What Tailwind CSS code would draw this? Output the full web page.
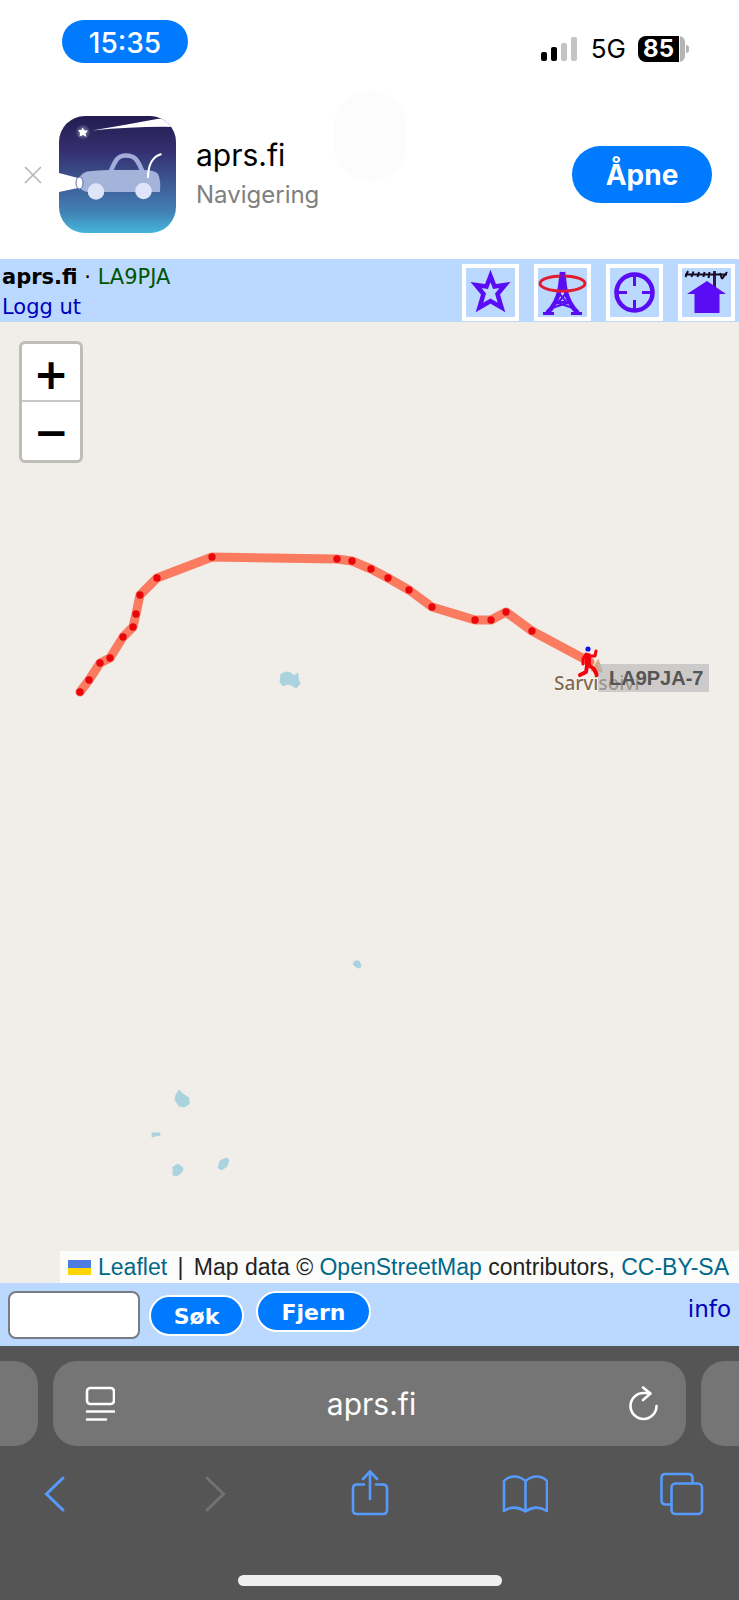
<!DOCTYPE html>
<html lang="no">
<head>
  <meta charset="UTF-8">
  <meta name="viewport" content="width=device-width, initial-scale=1">
  <title>aprs.fi</title>
  <script src="https://cdn.jsdelivr.net/npm/@tailwindcss/browser@4"></script>
</head>
<body class="min-h-screen flex flex-col bg-white text-black font-[Inter,sans-serif] overflow-x-hidden">

  <!-- Phone status bar -->
  <div class="relative flex items-start justify-between h-21 pt-5 pl-[62px] pr-[50px]">
    <div class="w-[126px] h-[43px] rounded-full bg-[#007aff] text-white text-[28px] leading-[46px] text-center font-medium">15:35</div>
    <div class="flex items-center gap-3 mt-4">
      <svg class="w-[38px] h-[26px]" viewBox="0 0 38 26">
        <rect x="0" y="16" width="6" height="9" rx="2" fill="#000"/>
        <rect x="10" y="11" width="6" height="14" rx="2" fill="#000"/>
        <rect x="20" y="7" width="6" height="18" rx="2" fill="#c4c4c4"/>
        <rect x="30" y="1" width="6" height="24" rx="2" fill="#c4c4c4"/>
      </svg>
      <span class="text-[26px] leading-[26px]">5G</span>
      <div class="flex items-center">
        <div class="w-[41px] h-[26px] rounded-l-lg bg-black text-white text-[24px] leading-[26px] text-center font-bold">85</div>
        <div class="w-[6px] h-[26px] rounded-r-lg bg-[#b4b4b4] border-l border-white"></div>
        <div class="w-[3px] h-2 ml-px rounded-r-full bg-[#b4b4b4]"></div>
      </div>
    </div>
    <div class="absolute left-1/2 top-[91px] -translate-x-1/2 w-[73px] h-[90px] rounded-full bg-[#fcfcfc]"></div>
  </div>

  <!-- App banner -->
  <div class="relative flex items-center h-[175px] pt-[6px] pl-6 pr-[27px]">
    <button aria-label="Lukk">
      <svg class="w-[18px] h-[18px]" viewBox="0 0 18 18" fill="none" stroke="#b5b5b5" stroke-width="1.6"><path d="M1 1 17 17M17 1 1 17"/></svg>
    </button>
    <svg class="w-[117px] h-[117px] ml-[17px] rounded-[26px]" viewBox="0 0 117 117">
      <defs>
        <linearGradient id="sky" x1="0" y1="0" x2="0" y2="1">
          <stop offset="0" stop-color="#231c50"/>
          <stop offset=".3" stop-color="#352f70"/>
          <stop offset=".65" stop-color="#3f669f"/>
          <stop offset=".82" stop-color="#4181b4"/>
          <stop offset="1" stop-color="#46b5dc"/>
        </linearGradient>
        <radialGradient id="glow"><stop offset="0" stop-color="#fff" stop-opacity=".5"/><stop offset="1" stop-color="#fff" stop-opacity="0"/></radialGradient>
      </defs>
      <rect width="117" height="117" fill="url(#sky)"/>
      <path d="M33 14.5Q66 9 98 3L117 1V11Q80 10 33 14.5Z" fill="#fff"/>
      <circle cx="24" cy="16" r="8" fill="url(#glow)"/>
      <path d="M23.500 11.500 25.500 14.500 29 14.500 26.500 17.500 27.500 21 24 19 20.500 20.500 21 17 19 14 22.500 14Z" fill="#fff"/>
      <path d="M0 57 19 62V72L0 76Z" fill="#fff"/>
      <path d="M51 57C56 45 58 39.500 67 39.500S79 44 84 57" fill="none" stroke="#a3abd9" stroke-width="4.500"/>
      <path d="M19 67Q20 58 28 55.500Q40 54 50 54H84Q96 54 99 58Q102 64 101 76H28Q20 74 19 67Z" fill="#a4b3da"/>
      <path d="M89 62C89 50 92 41 102.500 38" fill="none" stroke="#fff" stroke-width="2"/>
      <ellipse cx="20.500" cy="67" rx="3.500" ry="6" fill="#fff" stroke="#5a6cab" stroke-width="1"/>
      <circle cx="37" cy="75.500" r="8.300" fill="#dfe5f8"/>
      <circle cx="84.500" cy="75" r="8.300" fill="#dfe5f8"/>
    </svg>
    <div class="flex-1 pl-5">
      <div class="text-[30px] leading-10">aprs.fi</div>
      <div class="text-[24px] leading-10 text-[#808080]">Navigering</div>
    </div>
    <button class="w-[140px] h-[57px] rounded-full bg-[#007aff] text-white text-[28px] font-bold">Åpne</button>
  </div>

  <!-- aprs.fi header -->
  <header class="flex justify-between items-start bg-[#bbd8ff] pt-[3px] pl-[2px] pr-1 font-['DejaVu_Sans',sans-serif] text-[21px] leading-[30px]">
    <div>
      <div><b>aprs.fi</b> · <a href="#" class="text-[#005500]">LA9PJA</a></div>
      <a href="#" class="text-[#0000bb] block">Logg ut</a>
    </div>
    <nav class="flex gap-[15px] pt-[2px]">
      <button aria-label="Favoritter" class="border-4 border-white">
        <svg class="w-[49px] h-[49px]" viewBox="0 0 49 49" fill="none" stroke="#5a0cf5" stroke-width="4.500">
          <path d="M24.500 8 28.500 18.500 39 17 31.500 26 35.500 39.500 24.500 33 13.500 39.500 17.500 26 10 17 20.500 18.500Z"/>
        </svg>
      </button>
      <button aria-label="Stasjoner" class="border-4 border-white">
        <svg class="w-[49px] h-[49px]" viewBox="0 0 49 49" fill="none" stroke="#5a0cf5" stroke-width="3">
          <path d="M24 4 22 20Q19 36 9 45M25 4 27 20Q30 36 40 45" stroke-width="4.500"/>
          <path d="M21 20H28M20 24 30 36M29 24 19 36M17 34H32M14 40 32 34M35 40 17 34" stroke-width="2"/>
          <path d="M5 45.500H16M33 45.500H44"/>
          <ellipse cx="24.500" cy="15.500" rx="22.500" ry="7.500" stroke="#e01c30" stroke-width="3"/>
          <path d="M24.500 4V22" stroke-width="4"/>
        </svg>
      </button>
      <button aria-label="Min posisjon" class="border-4 border-white">
        <svg class="w-[49px] h-[49px]" viewBox="0 0 49 49" fill="none" stroke="#5a0cf5" stroke-width="4.500">
          <circle cx="24.500" cy="24.500" r="18"/>
          <path d="M24.500 6V18M24.500 32V43M6 24.500H17M32 24.500H43" stroke-width="3"/>
        </svg>
      </button>
      <button aria-label="Hjem" class="border-4 border-white">
        <svg class="w-[49px] h-[49px]" viewBox="0 0 49 49">
          <path d="M32.500 3V22" stroke="#3d1060" stroke-width="3"/>
          <path d="M3 6.500H45M6 3 3.500 9M11.500 3.500 9.500 9M17 4 15.500 9M22.500 4 21.500 9M27.500 4 26.500 10M38 5 40 11M45 4 40 11" stroke="#160c22" stroke-width="2" fill="none"/>
          <path d="M25 13 44 26H37.500V45H12.500V26H5Z" fill="#5a0cf5"/>
        </svg>
      </button>
    </nav>
  </header>

  <!-- Map -->
  <main class="relative flex-1 min-h-[600px] bg-[#f1eee9] overflow-hidden">
    <svg class="absolute inset-0 w-full h-full" viewBox="0 0 739 961" preserveAspectRatio="xMidYMid slice">
      <!-- lakes -->
      <g fill="#aad3df" stroke="#aad3df" stroke-linejoin="round">
        <path d="M281 352 286 350 291 351 294 354 298 351 298 356 300 362 296 366 291 363 288 362 283 364 280 360Z"/>
        <path d="M355 639 359 639 361 643 360 646 356 645 353 642Z"/>
        <path d="M179 768 183 772 189 776 189 782 184 785 179 784 175 778 176 773Z"/>
        <path d="M152 811 160 811 160 813 155 814 152 815Z"/>
        <path d="M173 845 178 842 183 846 182 850 177 854 173 853Z"/>
        <path d="M220 839 226 836 229 838 227 844 222 848 218 846Z"/>
      </g>
      <path d="M593 348 598 340 601 349Z" fill="#d9a882" stroke="#d9a882" stroke-width="3"/>
      <text x="554" y="368" font-family="Noto Sans, sans-serif" font-size="19" font-weight="500" fill="#806850" stroke="#f7f5f2" stroke-width="2" paint-order="stroke">Sarvisoivi</text>
      <!-- track -->
      <polyline fill="none" stroke="#fa7b60" stroke-width="9" stroke-linecap="round" stroke-linejoin="round"
        points="80,370 89,358 100,341 110,336 123,315 133,305 136,292 140,273 157,256 212,235 337,237 352,239 371,247 388,256 409,268 432,285 475,298 491,298 506,290 532,309 590,340"/>
      <g id="dots" fill="#e8060c"></g>
      <!-- walking station -->
      <g fill="none" stroke="#f5000c" stroke-width="3" stroke-linecap="round" stroke-linejoin="round">
        <path d="M586 332 583 337 583 342M590 334 595 334 596 329"/>
        <path d="M588 334V342" stroke-width="6"/>
        <path d="M587 344 586 350 580 353M590 344 594 347 597 353" stroke-width="4"/>
      </g>
      <circle cx="588" cy="327" r="2.600" fill="#1212e6"/>
      <rect x="598" y="342" width="111" height="28" fill="#b4b4b4" fill-opacity=".6"/>
      <text x="609" y="363" font-family="Liberation Sans, sans-serif" font-size="20" font-weight="bold" fill="#555">LA9PJA-7</text>
    </svg>

    <div class="absolute left-[19px] top-[19px] w-16 rounded-md border-3 border-[#bfbdba] bg-white flex flex-col font-['DejaVu_Sans',sans-serif] font-bold text-[42px] leading-[62px]">
      <button aria-label="Zoom inn" class="h-[58px] border-b-2 border-[#c8c8c8]">+</button>
      <button aria-label="Zoom ut" class="h-[58px]">−</button>
    </div>

    <div class="absolute right-0 bottom-0 flex items-center h-8 pl-2 pr-[10px] bg-white/80 whitespace-nowrap font-['Liberation_Sans',sans-serif] text-[23px] text-[#222]">
      <svg class="w-[23px] h-[15px] mr-[7px]" viewBox="0 0 23 15"><path fill="#4c7be1" d="M0 0h23v8H0z"/><path fill="#ffd500" d="M0 8h23v7H0z"/></svg>
      <p><a href="#" class="text-[#006889]">Leaflet</a> <span class="mx-1">|</span> Map data © <a href="#" class="text-[#006889]">OpenStreetMap</a> contributors, <a href="#" class="text-[#006889]">CC-BY-SA</a></p>
    </div>
  </main>

  <!-- Search bar -->
  <form onsubmit="return false" class="flex items-start h-[63px] pt-2 pl-2 pr-2 bg-[#bbd8ff] font-['DejaVu_Sans',sans-serif] text-[22px]">
    <input type="text" aria-label="Søk" class="w-[132px] h-12 rounded-lg border-2 border-[#767b85] bg-white px-2">
    <button class="w-[95px] h-[41px] ml-[9px] mt-1 pt-[2px] rounded-full border-2 border-white bg-[#007aff] text-white font-bold">Søk</button>
    <button type="button" class="w-[115px] h-[41px] ml-3 pt-[2px] rounded-full border-2 border-white bg-[#007aff] text-white font-bold">Fjern</button>
    <a href="#" class="ml-auto leading-9 text-[23px] text-[#0000bb]">info</a>
  </form>

  <!-- Browser toolbar -->
  <footer class="bg-[#555] text-white pt-[15px] pb-[14px]">
    <div class="flex gap-[15px]">
      <div class="w-[38px] h-[85px] rounded-r-3xl bg-[#757575]"></div>
      <div class="flex-1 flex items-center justify-between h-[85px] px-7 rounded-3xl bg-[#757575]">
        <button aria-label="Sidemeny" class="ml-1">
          <svg class="w-[30px] h-[36px]" viewBox="0 0 30 36" fill="none" stroke="#fff" stroke-width="2.600" stroke-linecap="round">
            <rect x="2" y="2" width="27" height="16" rx="3.500"/><path d="M2 25.500H29M2 33.500H21"/>
          </svg>
        </button>
        <span class="text-[30px] pt-[2px]">aprs.fi</span>
        <button aria-label="Last inn på nytt">
          <svg class="w-[30px] h-[36px]" viewBox="0 0 30 36" fill="none" stroke="#fff" stroke-width="2.600" stroke-linecap="round" stroke-linejoin="round">
            <path d="M28.500 20A13 13 0 1 1 15.500 7H22M15 1.500 22.500 7.500 15 14"/>
          </svg>
        </button>
      </div>
      <div class="w-[38px] h-[85px] rounded-l-3xl bg-[#757575]"></div>
    </div>

    <div class="flex justify-between pt-6 pl-8 pr-[34px]">
      <button aria-label="Tilbake">
        <svg class="w-[46px] h-[46px]" viewBox="0 0 46 46" fill="none" stroke="#569afc" stroke-width="3" stroke-linecap="round"><path d="M31 8 14.500 24 31 40"/></svg>
      </button>
      <button aria-label="Frem" disabled>
        <svg class="w-[46px] h-[46px]" viewBox="0 0 46 46" fill="none" stroke="#727272" stroke-width="3" stroke-linecap="round"><path d="M18 8 34.500 24 18 40"/></svg>
      </button>
      <button aria-label="Del">
        <svg class="w-[46px] h-[46px]" viewBox="0 0 46 46" fill="none" stroke="#569afc" stroke-width="2.600" stroke-linecap="round" stroke-linejoin="round">
          <path d="M18 14.500H11Q7 14.500 7 18.500V40Q7 44 11 44H37Q41 44 41 40V18.500Q41 14.500 37 14.500H30M24 29V2M17 9 24 1.500 31 9"/>
        </svg>
      </button>
      <button aria-label="Bokmerker">
        <svg class="w-[46px] h-[46px]" viewBox="0 0 46 46" fill="none" stroke="#569afc" stroke-width="2.600" stroke-linejoin="round">
          <path d="M23.500 11Q18 6.500 12.500 6.500Q6 6.500 2 11V41Q12.500 34 23.500 41.500Q34 34 45 41V11Q41 6.500 34.500 6.500Q29 6.500 23.500 11ZM23.500 11V41"/>
        </svg>
      </button>
      <button aria-label="Faner">
        <svg class="w-[46px] h-[46px]" viewBox="0 0 46 46" fill="none" stroke="#569afc" stroke-width="2.600">
          <rect x="12.500" y="13.500" width="30.500" height="30.500" rx="4"/>
          <path d="M12 34.500H7Q2.500 34.500 2.500 30.500V8Q2.500 4 6.500 4H29.500Q33.500 4 33.500 8V13"/>
        </svg>
      </button>
    </div>

    <div class="w-[264px] h-[11px] mx-auto mt-[59px] rounded-full bg-[#efefef]"></div>
  </footer>

  <script>
    // received positions along the track
    const points = [
      [80,370],[89,358],[100,341],[110,336],[123,315],[133,305],[136,292],[140,273],[157,256],[212,235],
      [337,237],[352,239],[371,247],[388,256],[409,268],[432,285],[475,298],[491,298],[506,290],[532,309]
    ];
    let str = "";
    for (const [x, y] of points) {
      str += `<circle cx="${x}" cy="${y}" r="3.700"/>`;
    }
    document.getElementById("dots").innerHTML = str;
  </script>
</body>
</html>
